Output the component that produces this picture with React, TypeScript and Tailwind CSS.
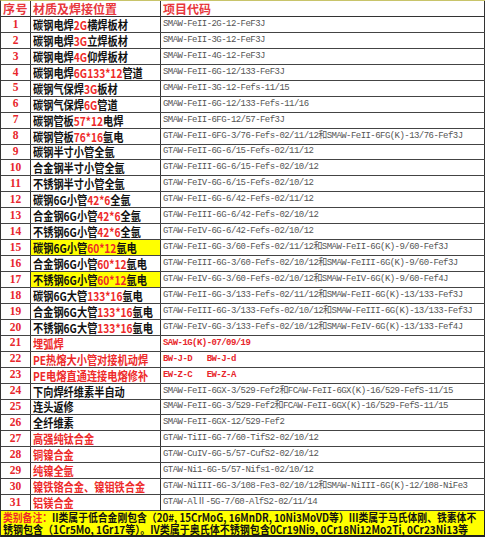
import React from "react";

type Seg = [string, boolean?];
type Row = { n: number; mat: Seg[]; code: string; codeRed?: boolean; hl?: boolean };

const rows: Row[] = [
  { n: 1, mat: [["碳钢电焊"], ["2G", true], ["横焊板材"]], code: "SMAW-FeII-2G-12-FeF3J" },
  { n: 2, mat: [["碳钢电焊"], ["3G", true], ["立焊板材"]], code: "SMAW-FeII-3G-12-FeF3J" },
  { n: 3, mat: [["碳钢电焊"], ["4G", true], ["仰焊板材"]], code: "SMAW-FeII-4G-12-FeF3J" },
  { n: 4, mat: [["碳钢电焊"], ["6G133*12", true], ["管道"]], code: "SMAW-FeII-6G-12/133-FeF3J" },
  { n: 5, mat: [["碳钢气保焊"], ["3G", true], ["板材"]], code: "GMAW-FeII-3G-12-Fefs-11/15" },
  { n: 6, mat: [["碳钢气保焊"], ["6G", true], ["管道"]], code: "GMAW-FeII-6G-12/133-Fefs-11/16" },
  { n: 7, mat: [["碳钢管板"], ["57*12", true], ["电焊"]], code: "SMAW-FeII-6FG-12/57-Fef3J" },
  { n: 8, mat: [["碳钢管板"], ["76*16", true], ["氩电"]], code: "GTAW-FeII-6FG-3/76-Fefs-02/11/12和SMAW-FeII-6FG(K)-13/76-Fef3J" },
  { n: 9, mat: [["碳钢半寸小管全氩"]], code: "GTAW-FeII-6G-6/15-Fefs-02/11/12" },
  { n: 10, mat: [["合金钢半寸小管全氩"]], code: "GTAW-FeIII-6G-6/15-Fefs-02/10/12" },
  { n: 11, mat: [["不锈钢半寸小管全氩"]], code: "GTAW-FeIV-6G-6/15-Fefs-02/10/12" },
  { n: 12, mat: [["碳钢6G小管"], ["42*6", true], ["全氩"]], code: "GTAW-FeII-6G-6/42-Fefs-02/11/12" },
  { n: 13, mat: [["合金钢6G小管"], ["42*6", true], ["全氩"]], code: "GTAW-FeIII-6G-6/42-Fefs-02/10/12" },
  { n: 14, mat: [["不锈钢6G小管"], ["42*6", true], ["全氩"]], code: "GTAW-FeIV-6G-6/42-Fefs-02/10/12" },
  { n: 15, mat: [["碳钢6G小管"], ["60*12", true], ["氩电"]], code: "GTAW-FeII-6G-3/60-Fefs-02/11/12和SMAW-FeII-6G(K)-9/60-Fef3J", hl: true },
  { n: 16, mat: [["合金钢6G小管"], ["60*12", true], ["氩电"]], code: "GTAW-FeIII-6G-3/60-Fefs-02/10/12和SMAW-FeIII-6G(K)-9/60-Fef3J" },
  { n: 17, mat: [["不锈钢6G小管"], ["60*12", true], ["氩电"]], code: "GTAW-FeIV-6G-3/60-Fefs-02/10/12和SMAW-FeIV-6G(K)-9/60-Fef4J", hl: true },
  { n: 18, mat: [["碳钢6G大管"], ["133*16", true], ["氩电"]], code: "GTAW-FeII-6G-3/133-Fefs-02/11/12和SMAW-FeII-6G(K)-13/133-Fef3J" },
  { n: 19, mat: [["合金钢6G大管"], ["133*16", true], ["氩电"]], code: "GTAW-FeIII-6G-3/133-Fefs-02/10/12和SMAW-FeIII-6G(K)-13/133-Fef3J" },
  { n: 20, mat: [["不锈钢6G大管"], ["133*16", true], ["氩电"]], code: "GTAW-FeIV-6G-3/133-Fefs-02/10/12和SMAW-FeIV-6G(K)-13/133-Fef4J" },
  { n: 21, mat: [["埋弧焊", true]], code: "SAW-1G(K)-07/09/19", codeRed: true },
  { n: 22, mat: [["PE热熔大小管对接机动焊", true]], code: "BW-J-D   BW-J-d", codeRed: true },
  { n: 23, mat: [["PE电熔直通连接电熔修补", true]], code: "EW-Z-C   EW-Z-A", codeRed: true },
  { n: 24, mat: [["下向焊纤维素半自动"]], code: "SMAW-FeII-6GX-3/529-Fef2和FCAW-FeII-6GX(K)-16/529-FefS-11/15" },
  { n: 25, mat: [["连头返修"]], code: "SMAW-FeII-6G-3/529-Fef2和FCAW-FeII-6GX(K)-16/529-FefS-11/15" },
  { n: 26, mat: [["全纤维素"]], code: "SMAW-FeII-6GX-12/529-Fef2" },
  { n: 27, mat: [["高强纯钛合金", true]], code: "GTAW-TiII-6G-7/60-TifS2-02/10/12" },
  { n: 28, mat: [["铜镍合金", true]], code: "GTAW-CuIV-6G-5/57-CufS2-02/10/12" },
  { n: 29, mat: [["纯镍全氩", true]], code: "GTAW-Ni1-6G-5/57-Nifs1-02/10/12" },
  { n: 30, mat: [["镍铁铬合金、镍钼铁合金", true]], code: "GTAW-NiIII-6G-3/108-Fe3-02/10/12和SMAW-NiIII-6G(K)-12/108-NiFe3" },
  { n: 31, mat: [["铝镁合金", true]], code: "GTAW-AlⅡ-5G-7/60-AlfS2-02/11/14" },
];

export default function App() {
  return (
    <div className="w-[487px] h-[540px] bg-white overflow-hidden font-['Noto_Sans_CJK_SC','Noto_Sans',sans-serif]">
      <div className="w-[485px] border-t border-t-[#c8c46a] border-l border-[#333]">
        <div className="flex h-[16px] border-b border-[#333] text-[12px] font-bold text-[#e8383d] leading-none">
          <div className="w-[30px] shrink-0 border-r border-[#333] flex items-center justify-center tracking-[0.5px]">
            序号
          </div>
          <div className="w-[130px] shrink-0 border-r border-[#333] flex items-center pl-[2px]">
            材质及焊接位置
          </div>
          <div className="flex-1 border-r border-[#333] flex items-center pl-[2px]">
            项目代码
          </div>
        </div>
        {rows.map((r) => (
          <div key={r.n} className="flex h-[15.95px] border-b border-[#444]">
            <div className="w-[30px] shrink-0 border-r border-[#333] flex items-center justify-center text-[11.5px] font-bold text-[#e8262c] leading-none font-['Liberation_Serif',serif]">
              {r.n}
            </div>
            <div
              className={`w-[130px] shrink-0 border-r border-[#333] flex items-end pb-[1px] pl-[2px] overflow-hidden ${r.hl ? "bg-[#ffff00]" : ""}`}
            >
              <div className="whitespace-nowrap text-[12px] font-bold leading-none text-[#111] origin-left scale-x-[0.85]">
                {r.mat.map(([t, red], i) => (
                  <span key={i} className={red ? "text-[#ee2a2a]" : ""}>{t}</span>
                ))}
              </div>
            </div>
            <div
              className={`flex-1 border-r border-[#333] flex items-center pl-[2px] whitespace-pre text-[9px] tracking-[-0.55px] leading-none font-['Liberation_Mono','Noto_Sans_CJK_SC',monospace] ${r.codeRed ? "text-[#e8262c] font-bold" : "text-[#555]"}`}
            >
              {r.code}
            </div>
          </div>
        ))}
        <div className="h-[26px] bg-[#ffff00] border-b-2 border-r border-[#222] flex flex-col justify-center pl-[2px] text-[11px] font-bold leading-[12px] whitespace-nowrap text-[#111]">
          <div className="origin-left scale-x-[0.892]">
            <span className="text-[#ee2a2a]">类别备注：</span>II类属于低合金刚包含（20#, 15CrMoG, 16MnDR, 10Ni3MoVD等）III类属于马氏体刚、铁素体不
          </div>
          <div className="origin-left scale-x-[0.91]">锈钢包含（1Cr5Mo, 1Gr17等）。IV类属于奥氏体不锈钢包含0Cr19Ni9, 0Cr18Ni12Mo2Ti, 0Cr23Ni13等</div>
        </div>
      </div>
    </div>
  );
}
